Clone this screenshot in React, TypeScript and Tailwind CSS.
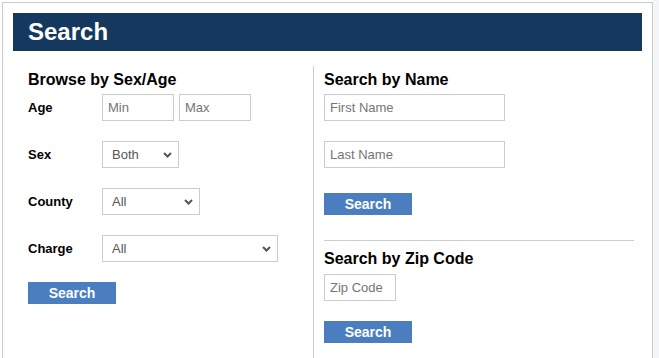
import type { ReactNode } from "react";

const font = "font-['Liberation_Sans',Arial,sans-serif]";

function TextBox({ placeholder, width }: { placeholder: string; width: string }) {
  return (
    <input
      type="text"
      placeholder={placeholder}
      className={`${width} h-[27px] border border-[#cccccc] bg-white px-[5px] text-[13px] text-[#333] outline-none placeholder:text-[#757575]`}
    />
  );
}

function Dropdown({ value, width }: { value: string; width: string }) {
  return (
    <div className={`relative ${width} h-[27px]`}>
      <select
        defaultValue={value}
        className="h-full w-full appearance-none border border-[#cccccc] bg-white pl-[9px] text-[13px] text-[#555] outline-none"
      >
        <option>{value}</option>
      </select>
      <svg
        className="pointer-events-none absolute right-[7px] top-[11px]"
        width="9"
        height="6"
        viewBox="0 0 9 6"
      >
        <polyline points="1,1 4.5,4.5 8,1" fill="none" stroke="#555" strokeWidth="2" />
      </svg>
    </div>
  );
}

function Row({ label, children, first }: { label: string; children: ReactNode; first?: boolean }) {
  return (
    <div className={`flex h-[27px] items-center ${first ? "mt-[5px]" : "mt-[20px]"}`}>
      <div className="w-[74px] text-[13px] font-bold text-black">{label}</div>
      {children}
    </div>
  );
}

function SearchButton({ className = "" }: { className?: string }) {
  return (
    <button
      type="button"
      className={`h-[22px] w-[88px] bg-[#4a7ebf] text-[14px] font-bold leading-[22px] text-white ${className}`}
    >
      Search
    </button>
  );
}

function Heading({ children, className = "" }: { children: ReactNode; className?: string }) {
  return (
    <h3 className={`h-[18px] text-[16px] font-bold leading-[18px] text-black ${className}`}>
      {children}
    </h3>
  );
}

export default function App() {
  return (
    <div className={`flex h-[358px] overflow-hidden bg-[#f4f5f7] ${font}`}>
      <div className="w-[653px] bg-white pl-[2px] pt-[2px]">
        <div className="min-h-[420px] w-[651px] border border-[#cccccc] bg-white p-[10px]">
          <div className="h-[38px] bg-[#15385e] pl-[15px] text-[24px] font-bold leading-[38px] text-white">
            Search
          </div>

          <div className="mt-[15px] flex min-h-[360px]">
            <div className="w-[301px] border-r border-[#cccccc] pl-[15px] pt-[5px]">
              <Heading>Browse by Sex/Age</Heading>
              <Row label="Age" first>
                <div className="flex gap-[5px]">
                  <TextBox placeholder="Min" width="w-[72px]" />
                  <TextBox placeholder="Max" width="w-[72px]" />
                </div>
              </Row>
              <Row label="Sex">
                <Dropdown value="Both" width="w-[77px]" />
              </Row>
              <Row label="County">
                <Dropdown value="All" width="w-[98px]" />
              </Row>
              <Row label="Charge">
                <Dropdown value="All" width="w-[176px]" />
              </Row>
              <SearchButton className="mt-[20px]" />
            </div>

            <div className="flex-1 pl-[10px] pr-[8px] pt-[5px]">
              <Heading>Search by Name</Heading>
              <div className="mt-[5px]">
                <TextBox placeholder="First Name" width="w-[181px]" />
              </div>
              <div className="mt-[20px]">
                <TextBox placeholder="Last Name" width="w-[181px]" />
              </div>
              <SearchButton className="mt-[25px]" />
              <div className="mt-[24px] h-px bg-[#cccccc]" />
              <Heading className="mt-[9px]">Search by Zip Code</Heading>
              <div className="mt-[6px]">
                <TextBox placeholder="Zip Code" width="w-[72px]" />
              </div>
              <SearchButton className="mt-[20px]" />
            </div>
          </div>
        </div>
      </div>
      <div className="flex-1" />
    </div>
  );
}
